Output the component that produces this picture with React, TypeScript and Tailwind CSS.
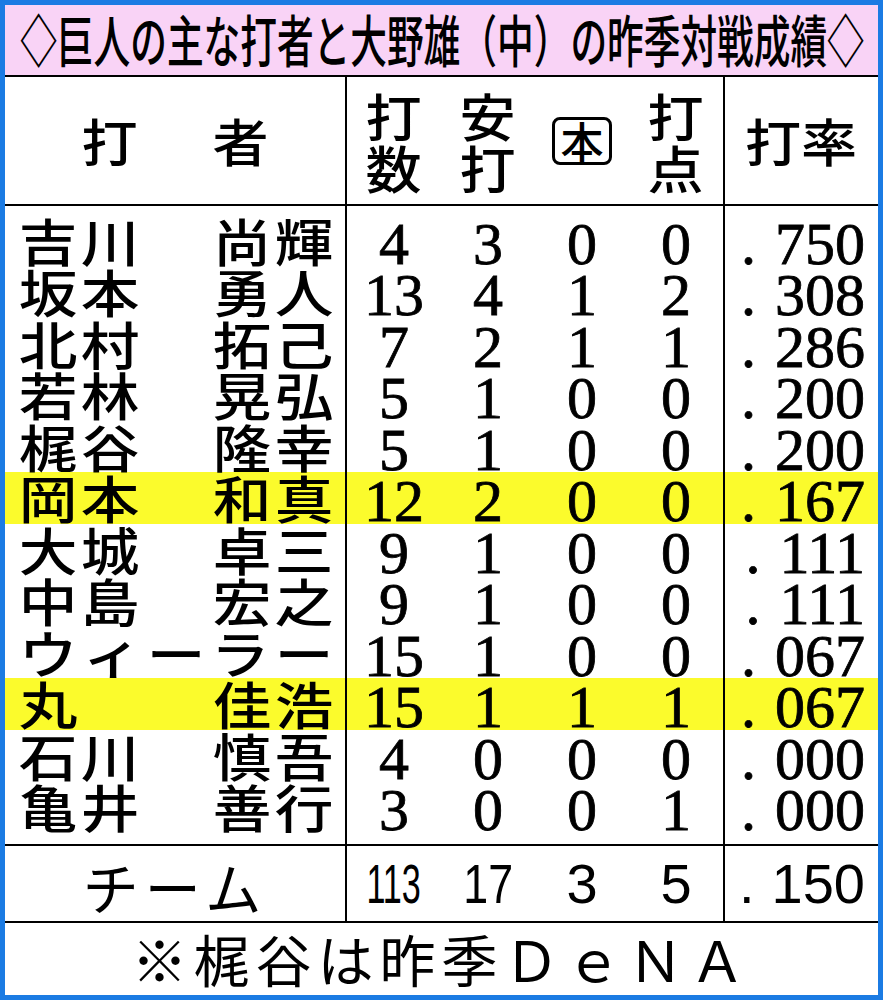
import React from "react";

const JP = { fontFamily: '"Noto Sans CJK JP", "Noto Sans", sans-serif' };
const SERIF = { fontFamily: '"Liberation Serif", "DejaVu Serif", serif' };
const SANS = { fontFamily: '"Liberation Sans", Arial, sans-serif' };

type Row = { s: string; g: string; n: string[]; r: string; hl?: boolean };

const rows: Row[] = [
  { s: "吉川", g: "尚輝", n: ["4", "3", "0", "0"], r: "750" },
  { s: "坂本", g: "勇人", n: ["13", "4", "1", "2"], r: "308" },
  { s: "北村", g: "拓己", n: ["7", "2", "1", "1"], r: "286" },
  { s: "若林", g: "晃弘", n: ["5", "1", "0", "0"], r: "200" },
  { s: "梶谷", g: "隆幸", n: ["5", "1", "0", "0"], r: "200" },
  { s: "岡本", g: "和真", n: ["12", "2", "0", "0"], r: "167", hl: true },
  { s: "大城", g: "卓三", n: ["9", "1", "0", "0"], r: "111" },
  { s: "中島", g: "宏之", n: ["9", "1", "0", "0"], r: "111" },
  { s: "ウィーラー", g: "", n: ["15", "1", "0", "0"], r: "067" },
  { s: "丸", g: "佳浩", n: ["15", "1", "1", "1"], r: "067", hl: true },
  { s: "石川", g: "慎吾", n: ["4", "0", "0", "0"], r: "000" },
  { s: "亀井", g: "善行", n: ["3", "0", "0", "1"], r: "000" },
];

function Chars({ text }: { text: string }) {
  return (
    <div className="flex">
      {Array.from(text).map((c, i) => (
        <span key={i} className="inline-block w-[62px] text-center scale-x-[1.15]">
          {c}
        </span>
      ))}
    </div>
  );
}

function Spacer({ h }: { h: string }) {
  return (
    <div className={`flex ${h}`}>
      <div className="w-[342px] border-r-2 border-black" />
      <div className="w-[378px] border-r-2 border-black" />
      <div className="flex-1" />
    </div>
  );
}

export default function App() {
  return (
    <div className="w-[883px] h-[1000px] border-[5px] border-[#1b7be3] bg-white text-black flex flex-col overflow-hidden">
      {/* Title */}
      <div
        className="h-[72px] shrink-0 bg-[#f9d3f6] border-b-2 border-black flex items-center justify-center overflow-hidden"
        style={JP}
      >
        <span className="inline-block shrink-0 whitespace-nowrap text-[56px] leading-[60px] font-medium scale-x-[0.655] translate-y-[-2px]">
          ◇巨人の主な打者と大野雄（中）の昨季対戦成績◇
        </span>
      </div>

      {/* Header */}
      <div className="h-[129px] shrink-0 border-b-2 border-black flex font-medium" style={JP}>
        <div className="w-[342px] border-r-2 border-black flex items-center justify-center gap-[80px] text-[51px] leading-none">
          <span className="inline-block scale-x-[1.1]">打</span>
          <span className="inline-block scale-x-[1.1]">者</span>
        </div>
        <div className="w-[378px] border-r-2 border-black flex items-center text-[51px] leading-[52px]">
          <div className="w-[94px] flex flex-col items-center">
            <span className="inline-block scale-x-[1.1]">打</span>
            <span className="inline-block scale-x-[1.1]">数</span>
          </div>
          <div className="w-[94px] flex flex-col items-center">
            <span className="inline-block scale-x-[1.1]">安</span>
            <span className="inline-block scale-x-[1.1]">打</span>
          </div>
          <div className="w-[94px] flex items-center justify-center">
            <div className="w-[60px] h-[48px] border-[3px] border-black rounded-[8px] flex items-center justify-center text-[43px] leading-none">
              本
            </div>
          </div>
          <div className="w-[94px] flex flex-col items-center">
            <span className="inline-block scale-x-[1.1]">打</span>
            <span className="inline-block scale-x-[1.1]">点</span>
          </div>
        </div>
        <div className="flex-1 flex items-center justify-center text-[51px] leading-none">
          <span className="inline-block scale-x-[1.1]">打率</span>
        </div>
      </div>

      {/* Data */}
      <div className="h-[640px] shrink-0 border-b-2 border-black flex flex-col">
        <Spacer h="h-[8.5px]" />
        {rows.map((row, i) => (
          <div key={i} className={`flex h-[51.5px] ${row.hl ? "bg-[#fbfb2c]" : ""}`}>
            <div
              className="w-[342px] border-r-2 border-black flex justify-between pl-[12px] pr-[10px] text-[51px] leading-[51.5px] font-medium"
              style={JP}
            >
              {row.g === "" ? (
                <div className="flex w-full justify-between">
                  {Array.from(row.s).map((c, j) => (
                    <span key={j} className="inline-block w-[62px] text-center scale-x-[1.15]">
                      {c}
                    </span>
                  ))}
                </div>
              ) : (
                <>
                  <Chars text={row.s} />
                  <Chars text={row.g} />
                </>
              )}
            </div>
            <div
              className="w-[378px] border-r-2 border-black flex text-[60px] leading-[51.5px] [-webkit-text-stroke:0.8px_black]"
              style={SERIF}
            >
              {row.n.map((v, j) => (
                <div key={j} className="w-[94px] text-center">
                  <span className="inline-block translate-y-[4px]">{v}</span>
                </div>
              ))}
            </div>
            <div
              className="flex-1 flex justify-end pr-[13px] text-[60px] leading-[51.5px] [-webkit-text-stroke:0.8px_black]"
              style={SERIF}
            >
              <span className="inline-block translate-y-[4px]">.</span>
              <span className="inline-block translate-y-[4px] ml-[19px]">{row.r}</span>
            </div>
          </div>
        ))}
        <div className="flex flex-1">
          <div className="w-[342px] border-r-2 border-black" />
          <div className="w-[378px] border-r-2 border-black" />
          <div className="flex-1" />
        </div>
      </div>

      {/* Team */}
      <div className="h-[77px] shrink-0 border-b-2 border-black flex">
        <div
          className="w-[342px] border-r-2 border-black flex items-center justify-center text-[56px] leading-none tracking-[6px]"
          style={JP}
        >
          <span className="inline-block translate-y-[2px]">チーム</span>
        </div>
        <div className="w-[378px] border-r-2 border-black flex items-center text-[56px] leading-none" style={SANS}>
          <div className="w-[94px] text-center">
            <span className="inline-block scale-x-[0.61]">113</span>
          </div>
          <div className="w-[94px] text-center">
            <span className="inline-block scale-x-[0.8]">17</span>
          </div>
          <div className="w-[94px] text-center">
            <span className="inline-block">3</span>
          </div>
          <div className="w-[94px] text-center">
            <span className="inline-block">5</span>
          </div>
        </div>
        <div className="flex-1 flex items-center justify-end pr-[13px] text-[56px] leading-none" style={SANS}>
          <span>.</span>
          <span className="ml-[17px]">150</span>
        </div>
      </div>

      {/* Footer */}
      <div className="flex-1 flex items-center justify-center text-[56px] leading-none tracking-[6px]" style={JP}>
        <span className="translate-y-[-1px] inline-block">※梶谷は昨季ＤｅＮＡ</span>
      </div>
    </div>
  );
}
